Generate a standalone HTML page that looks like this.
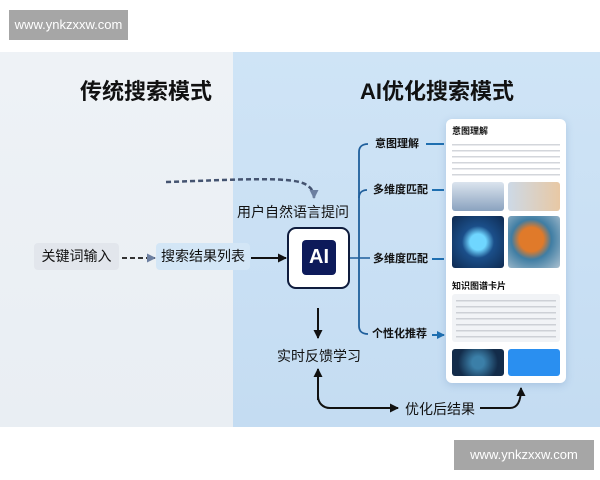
<!DOCTYPE html>
<html><head><meta charset="utf-8"><style>
*{margin:0;padding:0;box-sizing:border-box}
body{width:600px;height:480px;background:#fff;position:relative;overflow:hidden;font-family:"Liberation Sans","Noto Sans CJK SC",sans-serif}
.a{position:absolute}
.wm{background:#a6a6a6;color:#fff;font-size:13px;text-align:center;line-height:30px}
.t{color:#111;white-space:nowrap}
.l{font-size:11px;line-height:14px;font-weight:bold}
.img{position:absolute;border-radius:3px}
</style></head><body>
<div class="a wm" style="left:9px;top:10px;width:119px;height:30px">www.ynkzxxw.com</div>
<div class="a wm" style="left:454px;top:440px;width:140px;height:30px">www.ynkzxxw.com</div>
<div class="a" style="left:0;top:52px;width:233px;height:375px;background:linear-gradient(#eef2f6,#e9eef3)"></div>
<div class="a" style="left:233px;top:52px;width:367px;height:375px;background:linear-gradient(#cfe4f6,#c4dcf2)"></div>
<div class="a t" style="left:80px;top:74px;font-size:22px;font-weight:bold">传统搜索模式</div>
<div class="a t" style="left:360px;top:74px;font-size:22px;font-weight:bold">AI优化搜索模式</div>
<div class="a t" style="left:34px;top:243px;width:85px;height:27px;background:#e2e6ec;border-radius:4px;font-size:14px;line-height:27px;text-align:center">关键词输入</div>
<div class="a t" style="left:156px;top:243px;width:94px;height:27px;background:#d3e6f6;border-radius:4px;font-size:14px;line-height:27px;text-align:center">搜索结果列表</div>
<div class="a t" style="left:237px;top:202px;font-size:14px">用户自然语言提问</div>
<div class="a" style="left:287px;top:227px;width:63px;height:62px;border:2.5px solid #0f1c3d;border-radius:9px;background:#fff"></div>
<div class="a" style="left:302px;top:240px;width:34px;height:35px;background:#0d1a5a;border-radius:4px;color:#fff;font-weight:bold;font-size:20px;line-height:35px;text-align:center">AI</div>
<div class="a t" style="left:277px;top:346px;font-size:14px">实时反馈学习</div>
<div class="a t" style="left:405px;top:399px;font-size:14px">优化后结果</div>
<div class="a t l" style="left:375px;top:137px">意图理解</div>
<div class="a t l" style="left:373px;top:183px">多维度匹配</div>
<div class="a t l" style="left:373px;top:252px">多维度匹配</div>
<div class="a t l" style="left:372px;top:327px">个性化推荐</div>
<svg class="a" style="left:0;top:0" width="600" height="480">
<defs><marker id="m" markerUnits="userSpaceOnUse" markerWidth="9" markerHeight="9" refX="8" refY="4.5" orient="auto"><path d="M0,0L9,4.5L0,9z" fill="#111"/></marker>
<marker id="mb" markerUnits="userSpaceOnUse" markerWidth="8" markerHeight="8" refX="7" refY="4" orient="auto"><path d="M0,0L8,4L0,8z" fill="#1f6fb0"/></marker>
<marker id="mg" markerUnits="userSpaceOnUse" markerWidth="9" markerHeight="9" refX="8" refY="4.5" orient="auto"><path d="M0,0L9,4.5L0,9z" fill="#6c7fa0"/></marker></defs>
<path d="M122,258H155" stroke="#333" stroke-width="2" stroke-dasharray="5,3" marker-end="url(#mg)"/>
<path d="M251,258H286" stroke="#111" stroke-width="2" marker-end="url(#m)"/>
<path d="M166,182C230,180 290,176 305,184C312,188 314,192 314,198" stroke="#445370" stroke-width="2.5" stroke-dasharray="5,3" fill="none" marker-end="url(#mg)"/>
<path d="M350,258H370" stroke="#1f5f9c" stroke-width="1.5" fill="none"/>
<path d="M368,144C362,144 359,147 359,152V326C359,331 362,334 368,334" stroke="#1f5f9c" stroke-width="1.8" fill="none"/>
<path d="M359,198C359,193 362,190 367,190" stroke="#1f5f9c" stroke-width="1.8" fill="none"/>
<path d="M426,144H444M432,190H444M432,259H444M432,335H444" stroke="#1f6fb0" stroke-width="2" marker-end="url(#mb)"/>
<path d="M318,308V338" stroke="#111" stroke-width="2" marker-end="url(#m)"/>
<path d="M318,400V369" stroke="#111" stroke-width="2" marker-end="url(#m)"/>
<path d="M318,372V396C318,403 323,408 330,408H398" stroke="#111" stroke-width="2" fill="none" marker-end="url(#m)"/>
<path d="M480,408H510C517,408 521,402 521,388" stroke="#111" stroke-width="2" fill="none" marker-end="url(#m)"/>
</svg>
<div class="a" style="left:446px;top:119px;width:120px;height:264px;background:#fff;border-radius:6px;box-shadow:0 2px 8px rgba(80,120,170,.25)"></div>
<div class="a t" style="left:452px;top:124px;font-size:9px;font-weight:bold">意图理解</div>
<div class="a" style="left:452px;top:142px;width:108px;height:34px;background:repeating-linear-gradient(#fff 0 2px,#d3d6db 2px 3.5px,#fff 3.5px 6px)"></div>
<div class="img" style="left:452px;top:182px;width:52px;height:29px;background:linear-gradient(#dbe4ee,#8aa2bf)"></div>
<div class="img" style="left:508px;top:182px;width:52px;height:29px;background:linear-gradient(90deg,#cdd9e6,#e8c8a4)"></div>
<div class="img" style="left:452px;top:216px;width:52px;height:52px;background:radial-gradient(circle,#6fd6ff 0 8px,#1b4f8a 16px,#0c2447 40px)"></div>
<div class="img" style="left:508px;top:216px;width:52px;height:52px;background:radial-gradient(circle at 45% 45%,#e07a2a 0 12px,#3f7da3 20px,#a9bfcf 40px)"></div>
<div class="a t" style="left:452px;top:279px;font-size:9px;font-weight:bold">知识图谱卡片</div>
<div class="a" style="left:452px;top:294px;width:108px;height:48px;background:#f1f3f6;border-radius:3px"><div style="margin:4px;height:40px;background:repeating-linear-gradient(#f1f3f6 0 2px,#cdd0d6 2px 3.5px,#f1f3f6 3.5px 6px)"></div></div>
<div class="img" style="left:452px;top:349px;width:52px;height:27px;background:radial-gradient(circle,#3b7fa8 0 6px,#132c4a 20px)"></div>
<div class="img" style="left:508px;top:349px;width:52px;height:27px;background:#2a8ff0"></div>
</body></html>
